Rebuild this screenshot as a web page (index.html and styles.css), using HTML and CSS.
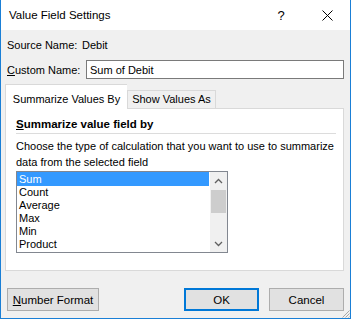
FILE: index.html
```html
<!DOCTYPE html>
<html lang="en">
<head>
    <meta charset="UTF-8">
    <meta name="viewport" content="width=device-width, initial-scale=1.0">
    <title>Value Field Settings</title>
    <link rel="stylesheet" href="styles.css">
</head>
<body>
    <div class="dialog">
        <div class="titlebar">
            <span class="title">Value Field Settings</span>
            <span class="help">?</span>
            <span class="close">
                <svg width="11" height="11" viewBox="0 0 11 11">
                    <path d="M0.5 0.5 L10.5 10.5 M10.5 0.5 L0.5 10.5" stroke="#000" stroke-width="1" fill="none"/>
                </svg>
            </span>
        </div>

        <div class="content">
            <div class="source-row">
                <span class="label">Source Name:</span>
                <span>Debit</span>
            </div>

            <div class="custom-row">
                <label for="customName" class="label"><u>C</u>ustom Name:</label>
                <input type="text" id="customName" value="Sum of Debit">
            </div>

            <div class="tabs">
                <div class="tab active">Summarize Values By</div>
                <div class="tab">Show Values As</div>
            </div>

            <div class="panel">
                <div class="group-title"><u>S</u>ummarize value field by</div>
                <p class="hint">Choose the type of calculation that you want to use to summarize<br>data from the selected field</p>

                <div class="listbox">
                    <ul>
                        <li class="selected">Sum</li>
                        <li>Count</li>
                        <li>Average</li>
                        <li>Max</li>
                        <li>Min</li>
                        <li>Product</li>
                    </ul>
                    <div class="scrollbar">
                        <div class="arrow">
                            <svg width="9" height="6" viewBox="0 0 9 6">
                                <path d="M1 5 L4.5 1.5 L8 5" stroke="#606060" stroke-width="1.3" fill="none"/>
                            </svg>
                        </div>
                        <div class="track">
                            <div class="thumb"></div>
                        </div>
                        <div class="arrow">
                            <svg width="9" height="6" viewBox="0 0 9 6">
                                <path d="M1 1 L4.5 4.5 L8 1" stroke="#606060" stroke-width="1.3" fill="none"/>
                            </svg>
                        </div>
                    </div>
                </div>
            </div>

            <div class="buttons">
                <button class="btn wide"><u>N</u>umber Format</button>
                <div class="spacer"></div>
                <button class="btn default">OK</button>
                <button class="btn">Cancel</button>
            </div>
        </div>

        <svg class="grip" width="10" height="10" viewBox="0 0 10 10">
            <path d="M9.5 2.5 L2.5 9.5 M9.5 5.5 L5.5 9.5 M9.5 8.5 L8.5 9.5" stroke="#a8a8a8" stroke-width="1"/>
        </svg>
    </div>
</body>
</html>
```

FILE: styles.css
```css
body {
    margin: 0;
    padding: 0;
    font-family: 'Liberation Sans', Arial, sans-serif;
    font-size: 11px;
    color: #000;
    background-color: #f0f0f0;
}

.dialog {
    position: relative;
    width: 351px;
    height: 319px;
    box-sizing: border-box;
    border: 1px solid #1a7fd6;
    border-top: none;
    background-color: #f0f0f0;
    white-space: nowrap;
    overflow: hidden;
}

.titlebar {
    height: 30px;
    background-color: #ffffff;
    display: flex;
    align-items: center;
    padding-left: 8px;
}

.titlebar .title {
    flex: 1;
    font-size: 11.5px;
}

.titlebar .help {
    width: 46px;
    text-align: center;
    font-size: 13px;
    margin-right: 0;
}

.titlebar .close {
    width: 46px;
    height: 30px;
    display: flex;
    align-items: center;
    justify-content: center;
}

.content {
    padding: 0 6px 0 4px;
}

.source-row {
    display: flex;
    height: 15px;
    line-height: 15px;
    margin-top: 8px;
    padding-left: 2px;
}

.source-row .label {
    width: 75px;
}

.custom-row {
    display: flex;
    align-items: center;
    height: 19px;
    margin-top: 7px;
    padding-left: 2px;
}

.custom-row .label {
    width: 79px;
}

.custom-row input {
    flex: 1;
    height: 19px;
    box-sizing: border-box;
    border: 1px solid #7a7a7a;
    padding: 0 3px;
    font-family: inherit;
    font-size: 11px;
    background-color: #ffffff;
    outline: none;
}

.tabs {
    display: flex;
    align-items: flex-end;
    margin-top: 5px;
    height: 24px;
    position: relative;
    z-index: 1;
}

.tab {
    width: 89px;
    height: 18px;
    line-height: 17px;
    text-align: center;
    border: 1px solid #d9d9d9;
    border-bottom: none;
    background-color: #f0f0f0;
    box-sizing: border-box;
}

.tab.active {
    width: 122px;
    height: 25px;
    line-height: 28px;
    background-color: #ffffff;
    margin-bottom: -1px;
    border-right: none;
}

.panel {
    background-color: #ffffff;
    border: 1px solid #d9d9d9;
    height: 163px;
    box-sizing: border-box;
    padding: 8px 7px 0 10px;
}

.group-title {
    font-weight: bold;
    font-size: 11.5px;
    line-height: 15px;
    padding-bottom: 1px;
    border-bottom: 1px solid #dcdcdc;
}

.hint {
    margin: 4px 0 0;
    line-height: 16px;
}

.listbox {
    display: flex;
    width: 212px;
    height: 82px;
    box-sizing: border-box;
    border: 1px solid #828790;
    margin-top: 1px;
    background-color: #ffffff;
}

.listbox ul {
    list-style: none;
    margin: 0;
    padding: 0 1px 0 0;
    flex: 1;
}

.listbox li {
    height: 13px;
    line-height: 13px;
    padding-left: 2px;
}

.listbox li.selected {
    background-color: #3399ff;
    color: #ffffff;
    height: 14px;
    line-height: 14px;
}

.scrollbar {
    width: 17px;
    display: flex;
    flex-direction: column;
    background-color: #f0f0f0;
}

.scrollbar .arrow {
    height: 17px;
    display: flex;
    align-items: center;
    justify-content: center;
}

.scrollbar .track {
    flex: 1;
}

.scrollbar .thumb {
    height: 23px;
    margin: 1px 1px 0;
    background-color: #cdcdcd;
}

.buttons {
    display: flex;
    margin-top: 17px;
    padding-left: 2px;
}

.spacer {
    flex: 1;
}

.btn {
    width: 75px;
    height: 23px;
    box-sizing: border-box;
    border: 1px solid #adadad;
    background-color: #e1e1e1;
    font-family: inherit;
    font-size: 11.5px;
    color: #000;
    padding: 0;
    margin-left: 10px;
}

.btn.wide {
    width: 92px;
    margin-left: 0;
}

.btn.default {
    border: 2px solid #0078d7;
}

.grip {
    position: absolute;
    right: 0;
    bottom: 0;
}
```
